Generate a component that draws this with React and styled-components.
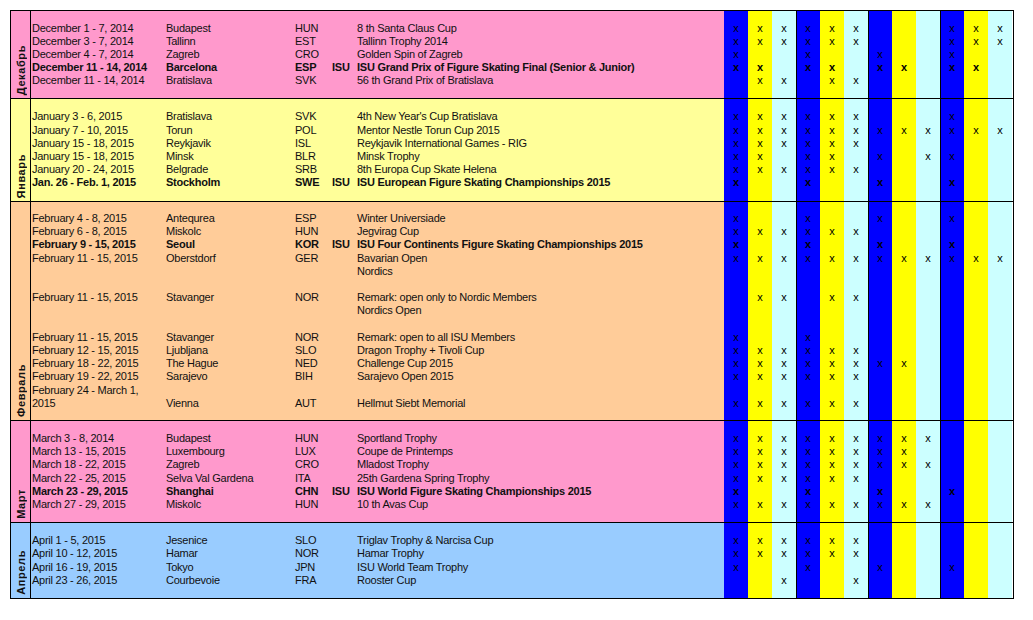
import React from 'react';
import styled, { createGlobalStyle } from 'styled-components';

const TONES = {
  pink: '#ff99cc',
  lemon: '#ffff99',
  peach: '#ffcc99',
  sky: '#99ccff',
};

const MARK_COLORS = ['#0000ff', '#ffff00', '#ccffff'];
const MARK_COLUMNS = [0, 1, 2, 3, 4, 5, 6, 7, 8, 9, 10, 11];

// [date, city, country, isu, event, marks, bold]
const sections = [
  {
    month: 'Декабрь',
    tone: 'pink',
    height: 87,
    rows: [
      ['December 1 - 7, 2014', 'Budapest', 'HUN', '', '8 th Santa Claus Cup', 'xxxxxx...xxx'],
      ['December 3 - 7, 2014', 'Tallinn', 'EST', '', 'Tallinn Trophy 2014', 'xxxxxx...xxx'],
      ['December 4 - 7, 2014', 'Zagreb', 'CRO', '', 'Golden Spin of Zagreb', 'x..x..x..x..'],
      ['December 11 - 14, 2014', 'Barcelona', 'ESP', 'ISU', 'ISU Grand Prix of Figure Skating Final (Senior & Junior)', 'xx.xx.xx.xx.', true],
      ['December 11 - 14, 2014', 'Bratislava', 'SVK', '', '56 th Grand Prix of Bratislava', '.xx.xx......'],
    ],
  },
  {
    month: 'Январь',
    tone: 'lemon',
    height: 102,
    rows: [
      ['January 3 - 6, 2015', 'Bratislava', 'SVK', '', "4th New Year's Cup Bratislava", 'xxxxxx...x..'],
      ['January 7 - 10, 2015', 'Torun', 'POL', '', 'Mentor Nestle Torun Cup 2015', 'xxxxxxxxxxxx'],
      ['January 15 - 18, 2015', 'Reykjavik', 'ISL', '', 'Reykjavik International Games - RIG', 'xxxxxx......'],
      ['January 15 - 18, 2015', 'Minsk', 'BLR', '', 'Minsk Trophy', 'xx.xx.x.xx..'],
      ['January 20 - 24, 2015', 'Belgrade', 'SRB', '', '8th Europa Cup Skate Helena', 'xxxxxx......'],
      ['Jan. 26 - Feb. 1, 2015', 'Stockholm', 'SWE', 'ISU', 'ISU European Figure Skating Championships 2015', 'x..x..x..x..', true],
    ],
  },
  {
    month: 'Февраль',
    tone: 'peach',
    height: 218,
    rows: [
      ['February 4 - 8, 2015', 'Antequrea', 'ESP', '', 'Winter Universiade', 'x..x..x..x..'],
      ['February 6 - 8, 2015', 'Miskolc', 'HUN', '', 'Jegvirag Cup', 'xxxxxx......'],
      ['February 9 - 15, 2015', 'Seoul', 'KOR', 'ISU', 'ISU Four Continents Figure Skating Championships 2015', 'x..x..x..x..', true],
      ['February 11 - 15, 2015', 'Oberstdorf', 'GER', '', 'Bavarian Open', 'xxxxxxxxxxxx'],
      ['', '', '', '', 'Nordics', ''],
      ['', '', '', '', '', ''],
      ['February 11 - 15, 2015', 'Stavanger', 'NOR', '', 'Remark: open only to Nordic Members', '.xx.xx......'],
      ['', '', '', '', 'Nordics Open', ''],
      ['', '', '', '', '', ''],
      ['February 11 - 15, 2015', 'Stavanger', 'NOR', '', 'Remark: open to all ISU Members', 'x..x........'],
      ['February 12 - 15, 2015', 'Ljubljana', 'SLO', '', 'Dragon Trophy + Tivoli Cup', 'xxxxxx......'],
      ['February 18 - 22, 2015', 'The Hague', 'NED', '', 'Challenge Cup 2015', 'xxxxxxxx....'],
      ['February 19 - 22, 2015', 'Sarajevo', 'BIH', '', 'Sarajevo Open 2015', 'xxxxxx......'],
      ['February 24 - March 1,', '', '', '', '', ''],
      ['2015', 'Vienna', 'AUT', '', 'Hellmut Siebt Memorial', 'xxxxxx......'],
    ],
  },
  {
    month: 'Март',
    tone: 'pink',
    height: 101,
    rows: [
      ['March 3 - 8, 2014', 'Budapest', 'HUN', '', 'Sportland Trophy', 'xxxxxxxxx...'],
      ['March 13 - 15, 2015', 'Luxembourg', 'LUX', '', 'Coupe de Printemps', 'xxxxxxxx....'],
      ['March 18 - 22, 2015', 'Zagreb', 'CRO', '', 'Mladost Trophy', 'xxxxxxxxx...'],
      ['March 22 - 25, 2015', 'Selva Val Gardena', 'ITA', '', '25th Gardena Spring Trophy', 'xxxxxx......'],
      ['March 23 - 29, 2015', 'Shanghai', 'CHN', 'ISU', 'ISU World Figure Skating Championships 2015', 'x..x..x..x..', true],
      ['March 27 - 29, 2015', 'Miskolc', 'HUN', '', '10 th Avas Cup', 'xxxxxxxxx...'],
    ],
  },
  {
    month: 'Апрель',
    tone: 'sky',
    height: 75,
    rows: [
      ['April 1 - 5, 2015', 'Jesenice', 'SLO', '', 'Triglav Trophy & Narcisa Cup', 'xxxxxx......'],
      ['April 10 - 12, 2015', 'Hamar', 'NOR', '', 'Hamar Trophy', 'xxxxxx......'],
      ['April 16 - 19, 2015', 'Tokyo', 'JPN', '', 'ISU World Team Trophy', 'x..x..x..x..'],
      ['April 23 - 26, 2015', 'Courbevoie', 'FRA', '', 'Rooster Cup', '..x..x......'],
    ],
  },
];

const App = () => (
  <>
    <GlobalStyle />
    <Sheet>
      {sections.map((section, i) => (
        <Section key={section.month} $first={i === 0} $height={section.height}>
          <MonthCell $tone={TONES[section.tone]}>
            <MonthLabel>{section.month}</MonthLabel>
          </MonthCell>
          <Events $tone={TONES[section.tone]}>
            {section.rows.map(([date, city, country, isu, event, , bold], j) => (
              <EventRow key={j} $bold={bold}>
                <Cell $width={134}>{date}</Cell>
                <Cell $width={129}>{city}</Cell>
                <Cell $width={37}>{country}</Cell>
                <Cell $width={25}>{isu}</Cell>
                <EventName>{event}</EventName>
              </EventRow>
            ))}
          </Events>
          {MARK_COLUMNS.map((col) => (
            <MarkColumn key={col} $color={MARK_COLORS[col % 3]} $divider={col > 0 && col % 3 === 0}>
              {section.rows.map((row, j) => (
                <Mark key={j} $bold={row[6]}>
                  {row[5][col] === 'x' ? 'x' : ''}
                </Mark>
              ))}
            </MarkColumn>
          ))}
        </Section>
      ))}
    </Sheet>
  </>
);

const GlobalStyle = createGlobalStyle`
  body {
    margin: 0;
    background: #ffffff;
    font-family: "Liberation Sans", Arial, sans-serif;
    color: #111111;
  }
`;

const Sheet = styled.div`
  margin: 10px 0 0 10px;
  width: 1002px;
  border: 1px solid #000000;
`;

const Section = styled.div`
  display: flex;
  height: ${(p) => p.$height}px;
  border-top: ${(p) => (p.$first ? 'none' : '1px solid #000000')};
`;

const MonthCell = styled.div`
  width: 20px;
  flex-shrink: 0;
  display: flex;
  flex-direction: column;
  justify-content: flex-end;
  align-items: center;
  padding-bottom: 3px;
  box-sizing: border-box;
  border-right: 1px solid #000000;
  background: ${(p) => p.$tone};
`;

const MonthLabel = styled.span`
  writing-mode: vertical-rl;
  transform: rotate(180deg);
  font-size: 11px;
  font-weight: bold;
  letter-spacing: 0.6px;
  line-height: 12px;
`;

const Events = styled.div`
  width: 693px;
  flex-shrink: 0;
  display: flex;
  flex-direction: column;
  justify-content: center;
  background: ${(p) => p.$tone};
`;

const EventRow = styled.div`
  display: flex;
  height: 13.2px;
  line-height: 13.2px;
  font-size: 11px;
  letter-spacing: -0.25px;
  font-weight: ${(p) => (p.$bold ? 'bold' : 'normal')};
  white-space: nowrap;
`;

const Cell = styled.div`
  width: ${(p) => p.$width}px;
  flex-shrink: 0;
  padding-left: 1px;
  box-sizing: border-box;
`;

const EventName = styled.div`
  flex: 1;
  padding-left: 1px;
`;

const MarkColumn = styled.div`
  width: 24px;
  flex-shrink: 0;
  display: flex;
  flex-direction: column;
  justify-content: center;
  background: ${(p) => p.$color};
  box-shadow: ${(p) => (p.$divider ? 'inset 1px 0 0 #000000' : 'none')};
`;

const Mark = styled.div`
  height: 13.2px;
  line-height: 13.2px;
  text-align: center;
  font-size: 11px;
  font-weight: ${(p) => (p.$bold ? 'bold' : 'normal')};
  color: #000000;
`;

export default App;
